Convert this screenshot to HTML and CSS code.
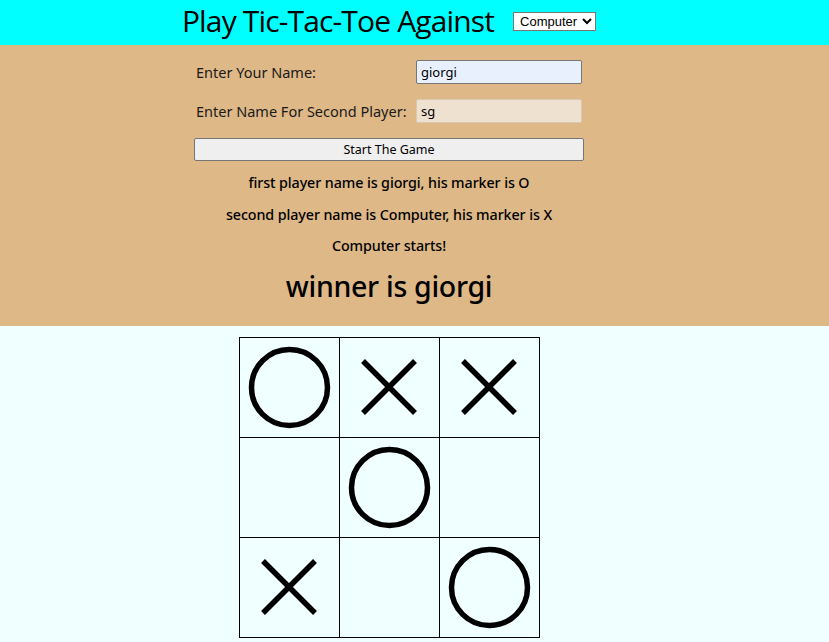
FILE: index.html
```html
<!DOCTYPE html>
<html>
<head>
<meta charset="utf-8">
<link rel="stylesheet" href="styles.css">
</head>
<body>
<header class="top">
  <div class="inner top-inner">
    <h1 class="title">Play Tic-Tac-Toe Against</h1>
    <select class="opponent"><option>Computer</option><option>Player</option></select>
  </div>
</header>
<section class="panel">
  <div class="inner">
    <div class="form">
      <div class="row"><label class="lbl">Enter Your Name:</label><input class="field field-auto" value="giorgi"></div>
      <div class="row"><label class="lbl">Enter Name For Second Player:</label><input class="field field-dis" value="sg"></div>
      <button class="start">Start The Game</button>
    </div>
    <p class="info">first player name is giorgi, his marker is O</p>
    <p class="info">second player name is Computer, his marker is X</p>
    <p class="info">Computer starts!</p>
    <p class="winner">winner is giorgi</p>
  </div>
</section>
<main class="boardwrap">
  <div class="inner">
    <div class="board">
      <div class="cell"><svg viewBox="0 0 99 99"><circle cx="49.5" cy="49.5" r="38" class="o"/></svg></div>
      <div class="cell"><svg viewBox="0 0 99 99"><path d="M23 23L75 75M75 23L23 75" class="x"/></svg></div>
      <div class="cell"><svg viewBox="0 0 99 99"><path d="M23 23L75 75M75 23L23 75" class="x"/></svg></div>
      <div class="cell"></div>
      <div class="cell"><svg viewBox="0 0 99 99"><circle cx="49.5" cy="49.5" r="38" class="o"/></svg></div>
      <div class="cell"></div>
      <div class="cell"><svg viewBox="0 0 99 99"><path d="M23 23L75 75M75 23L23 75" class="x"/></svg></div>
      <div class="cell"></div>
      <div class="cell"><svg viewBox="0 0 99 99"><circle cx="49.5" cy="49.5" r="38" class="o"/></svg></div>
    </div>
  </div>
</main>
</body>
</html>
```
FILE: styles.css
```css
html, body { margin: 0; padding: 0; }
body {
  background: #f0ffff;
  font-family: "Noto Sans", "Open Sans", sans-serif;
  color: #000;
}
.inner {
  width: 778px;
}
.top {
  background: #00ffff;
  height: 45px;
}
.top-inner {
  display: flex;
  justify-content: center;
  align-items: center;
  height: 45px;
  gap: 19px;
}
.title {
  margin: 0;
  font-family: "Open Sans", sans-serif;
  font-weight: 400;
  font-size: 30px;
  letter-spacing: -0.85px;
  line-height: 40px;
  padding-bottom: 4px;
}
.opponent {
  font-family: "Liberation Sans", Arial, sans-serif;
  font-size: 13px;
  height: 19px;
  width: 83px;
  border: 1px solid #767676;
  background: #fff;
  padding: 0 0 0 2px;
  margin-bottom: 3px;
}
.panel {
  background: #deb887;
  height: 281px;
  box-sizing: border-box;
  padding-top: 15px;
}
.form {
  width: 390px;
  margin: 0 auto;
  display: flex;
  flex-direction: column;
}
.row {
  display: flex;
  align-items: center;
  justify-content: space-between;
  padding-left: 2px;
  padding-right: 2px;
  height: 24px;
  margin-bottom: 15px;
}
.lbl {
  font-size: 14.5px;
  color: #1a1a1a;
}
.field {
  width: 166px;
  height: 24px;
  box-sizing: border-box;
  border: 1px solid #767676;
  border-radius: 2px;
  font-family: "Noto Sans", sans-serif;
  font-size: 13px;
  padding: 0 4px;
}
.field-auto { background: #e8f0fe; }
.field-dis {
  background: #eee1d0;
  border-color: #d8c8b4;
}
.start {
  width: 390px;
  height: 23px;
  box-sizing: border-box;
  border: 1px solid #767676;
  border-radius: 2px;
  background: #efefef;
  font-family: "Noto Sans", sans-serif;
  font-size: 12.5px;
  padding: 0;
}
.info {
  margin: 0;
  text-align: center;
  font-size: 14.3px;
  font-weight: 500;
  letter-spacing: -0.1px;
  line-height: 31.5px;
}
.info:first-of-type { margin-top: 6px; }
.winner {
  margin: 4px 0 0;
  text-align: center;
  font-size: 28.5px;
  line-height: 40px;
  font-weight: 500;
  letter-spacing: -0.3px;
}
.boardwrap {
  padding-top: 11px;
}
.board {
  margin: 0 auto;
  display: grid;
  grid-template-columns: repeat(3, 99px);
  grid-template-rows: repeat(3, 99px);
  gap: 1px;
  background: #000;
  border: 1px solid #000;
  box-sizing: border-box;
  width: 301px;
  height: 301px;
}
.cell {
  background: #f0ffff;
}
.cell svg { display: block; width: 99px; height: 99px; }
.o { fill: none; stroke: #000; stroke-width: 5.5; }
.x { fill: none; stroke: #000; stroke-width: 5.5; }
```
